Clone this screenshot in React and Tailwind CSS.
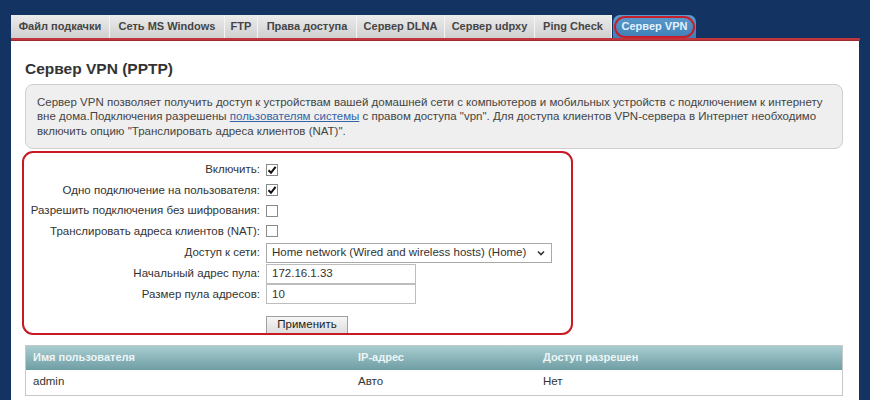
import React from "react";

const tabs = [
  ["Файл подкачки", "w-[99px]"],
  ["Сеть MS Windows", "w-[115px]"],
  ["FTP", "w-[33px]"],
  ["Права доступа", "w-[99px]"],
  ["Сервер DLNA", "w-[88px]"],
  ["Сервер udpxy", "w-[90px]"],
  ["Ping Check", "w-[77px]"],
];

function Check({ checked }) {
  return (
    <div className="w-[12px] h-[12px] border border-[#8a8a8a] bg-white flex items-center justify-center">
      {checked && (
        <svg width="10" height="10" viewBox="0 0 10 10">
          <path d="M1.5 5.2 L4 7.8 L8.6 1.8" fill="none" stroke="#111" strokeWidth="2" />
        </svg>
      )}
    </div>
  );
}

function Label({ children, h }) {
  return (
    <div className={`${h} flex items-center justify-end text-[11.5px] text-[#333] whitespace-nowrap`}>{children}</div>
  );
}

function Ctl({ children, h }) {
  return <div className={`${h} flex items-center`}>{children}</div>;
}

export default function App() {
  return (
    <div className="w-[870px] h-[400px] overflow-hidden bg-[#133462] pl-[11px] pt-[15px] font-['Liberation_Sans',Arial,sans-serif]">
      <div className="w-[849px]">
        {/* tabs */}
        <div className="flex h-[23px] items-stretch">
          {tabs.map(([t, w]) => (
            <div
              key={t}
              className={`${w} flex items-center justify-center bg-gradient-to-b from-[#ececec] to-[#d0d0d0] border-r border-[#f4f4f4] text-[11px] font-bold text-[#454545] whitespace-nowrap`}
            >
              {t}
            </div>
          ))}
          <div className="relative w-[83px] ml-[1px] rounded-t-[7px] bg-gradient-to-b from-[#5b9bcc] to-[#3f7fb6] flex items-center justify-center text-[11px] font-bold text-[#e4f2ff] whitespace-nowrap">
            Сервер VPN
            <div className="absolute left-[1px] right-[1px] top-[1px] bottom-[0px] rounded-full border-[2.5px] border-[#c81e2b]" />
          </div>
        </div>
        <div className="h-[3px] bg-[#c1363d] border-b border-[#9a2a30]" />
        {/* white panel */}
        <div className="w-[848px] h-[400px] bg-white px-[14px] pt-[19px]">
          <div className="h-[18px] leading-[18px] text-[15.5px] font-bold text-[#333]">Сервер VPN (PPTP)</div>
          <div className="mt-[6px] w-[818px] rounded-[8px] border border-[#cfcfcf] bg-[#efefef] px-[11px] py-[9.5px] text-[11.5px] leading-[14.5px] text-[#444]">
            <div className="whitespace-nowrap">
              Сервер VPN позволяет получить доступ к устройствам вашей домашней сети с компьютеров и мобильных устройств с подключением к интернету
            </div>
            <div className="whitespace-nowrap">
              вне дома.Подключения разрешены{" "}
              <span className="text-[#3464a8] underline">пользователям системы</span> с правом доступа "vpn". Для доступа клиентов VPN-сервера в Интернет необходимо
            </div>
            <div className="whitespace-nowrap">включить опцию "Транслировать адреса клиентов (NAT)".</div>
          </div>

          {/* form in red box */}
          <div className="mt-[2px] -ml-[3px] w-[551px] h-[184px] rounded-[11px] border-2 border-[#c81a24] overflow-hidden pt-[7px]">
            <div className="grid grid-cols-[236px_1fr] gap-x-[6px]">
              <Label h="h-[20.5px]">Включить:</Label>
              <Ctl h="h-[20.5px]"><Check checked /></Ctl>
              <Label h="h-[20.5px]">Одно подключение на пользователя:</Label>
              <Ctl h="h-[20.5px]"><Check checked /></Ctl>
              <Label h="h-[20.5px]">Разрешить подключения без шифрования:</Label>
              <Ctl h="h-[20.5px]"><Check /></Ctl>
              <Label h="h-[20.5px]">Транслировать адреса клиентов (NAT):</Label>
              <Ctl h="h-[20.5px]"><Check /></Ctl>
              <Label h="h-[22px]">Доступ к сети:</Label>
              <Ctl h="h-[22px]">
                <div className="w-[286px] h-[20px] border border-[#a9a9a9] bg-white flex items-center justify-between pl-[5px] pr-[6px] text-[11.5px] text-[#333] whitespace-nowrap">
                  <span>Home network (Wired and wireless hosts) (Home)</span>
                  <svg width="8" height="6" viewBox="0 0 8 6">
                    <path d="M1 1.5 L4 4.5 L7 1.5" fill="none" stroke="#333" strokeWidth="1.6" />
                  </svg>
                </div>
              </Ctl>
              <Label h="h-[20.5px]">Начальный адрес пула:</Label>
              <Ctl h="h-[20.5px]">
                <div className="w-[150px] h-[20px] border border-[#bdbdbd] bg-white flex items-center pl-[5px] text-[11.5px] text-[#333]">172.16.1.33</div>
              </Ctl>
              <Label h="h-[20.5px]">Размер пула адресов:</Label>
              <Ctl h="h-[20.5px]">
                <div className="w-[150px] h-[20px] border border-[#bdbdbd] bg-white flex items-center pl-[5px] text-[11.5px] text-[#333]">10</div>
              </Ctl>
              <div />
              <div className="mt-[11px]">
                <div className="w-[82px] h-[19px] border border-[#a0a0a0] bg-gradient-to-b from-[#f6f6f6] to-[#dcdcdc] flex items-center justify-center text-[11.5px] text-[#222]">
                  Применить
                </div>
              </div>
            </div>
          </div>

          {/* table */}
          <div className="mt-[10px] w-[818px] border border-[#c8c8c8]">
            <div className="h-[24px] grid grid-cols-[325px_185px_1fr] items-center bg-gradient-to-b from-[#a8cdd1] to-[#6f9ea4] text-[11px] font-bold text-[#eef5f6]">
              <div className="pl-[7px]">Имя пользователя</div>
              <div className="pl-[7px]">IP-адрес</div>
              <div className="pl-[7px]">Доступ разрешен</div>
            </div>
            <div className="h-[25px] grid grid-cols-[325px_185px_1fr] items-center bg-white text-[11.5px] text-[#333]">
              <div className="pl-[7px]">admin</div>
              <div className="pl-[7px]">Авто</div>
              <div className="pl-[7px]">Нет</div>
            </div>
          </div>
        </div>
      </div>
    </div>
  );
}
